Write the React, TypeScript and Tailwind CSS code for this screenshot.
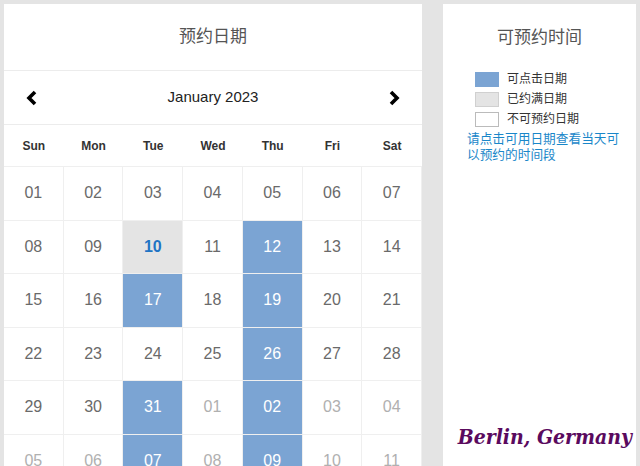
const weekDays = ["Sun", "Mon", "Tue", "Wed", "Thu", "Fri", "Sat"]

type Day = { label: string; kind: "normal" | "open" | "full" | "other" }

const openDays = ["12", "17", "19", "26", "31"]

function buildDays(): Day[] {
  const days: Day[] = []
  for (let d = 1; d <= 31; d++) {
    const label = String(d).padStart(2, "0")
    let kind: Day["kind"] = "normal"
    if (openDays.includes(label)) kind = "open"
    if (label === "10") kind = "full"
    days.push({ label, kind })
  }
  for (let d = 1; d <= 11; d++) {
    const label = String(d).padStart(2, "0")
    days.push({ label, kind: label === "02" || label === "07" || label === "09" ? "open" : "other" })
  }
  return days
}

function Chevron({ dir }: { dir: "left" | "right" }) {
  return (
    <svg width="14" height="16" viewBox="0 0 14 16">
      <polyline
        points={dir === "left" ? "10,2 4,8 10,14" : "4,2 10,8 4,14"}
        fill="none"
        stroke="#000"
        strokeWidth="3.6"
        strokeLinejoin="miter"
      />
    </svg>
  )
}

function DayCell({ day }: { day: Day }) {
  const base = "h-[53.5px] flex items-center justify-center border-r border-b border-[#efefef] text-[16px]"
  if (day.kind === "open") {
    return <div className={`${base} bg-[#7ba4d3] text-white border-[#9fbde0]`}>{day.label}</div>
  }
  if (day.kind === "full") {
    return <div className={`${base} bg-[#e4e4e4] text-[#1f74c4] font-bold text-[15px]`}>{day.label}</div>
  }
  if (day.kind === "other") {
    return <div className={`${base} text-[#b0b0b0]`}>{day.label}</div>
  }
  return <div className={`${base} text-[#6a6a6a]`}>{day.label}</div>
}

export default function App() {
  const days = buildDays()
  return (
    <div
      className="relative w-[640px] h-[466px] overflow-hidden bg-[#e4e4e4] pt-[4px] pl-[4px] flex gap-[21px]"
      style={{ fontFamily: '"Liberation Sans", "Noto Sans CJK SC", sans-serif' }}
    >
      <div className="w-[418px] bg-white self-start">
        <div className="h-[67px] border-b border-[#ececec] flex items-center justify-center text-[17px] text-[#555]">
          预约日期
        </div>
        <div className="h-[54px] border-b border-[#ececec] flex items-center justify-between px-[21px]">
          <Chevron dir="left" />
          <span className="text-[15px] text-[#222]">January 2023</span>
          <Chevron dir="right" />
        </div>
        <div className="grid grid-cols-7 h-[42px] border-b border-[#efefef]">
          {weekDays.map((w) => (
            <div key={w} className="flex items-center justify-center text-[12px] font-bold text-[#333]">
              {w}
            </div>
          ))}
        </div>
        <div className="grid grid-cols-7">
          {days.map((d, i) => (
            <DayCell key={i} day={d} />
          ))}
        </div>
      </div>

      <div className="w-[193px] h-[470px] bg-white">
        <div className="h-[67px] flex items-center justify-center text-[17px] text-[#555]">可预约时间</div>
        <div className="pl-[32px] flex flex-col gap-[4px]">
          <div className="flex items-center gap-[8px] h-[16px]">
            <span className="w-[24px] h-[15px] bg-[#7ba4d3] border border-[#7ba4d3]" />
            <span className="text-[12px] text-[#333]">可点击日期</span>
          </div>
          <div className="flex items-center gap-[8px] h-[16px]">
            <span className="w-[24px] h-[15px] bg-[#e4e4e4] border border-[#d0d0d0]" />
            <span className="text-[12px] text-[#333]">已约满日期</span>
          </div>
          <div className="flex items-center gap-[8px] h-[16px]">
            <span className="w-[24px] h-[15px] bg-white border border-[#bbb]" />
            <span className="text-[12px] text-[#333]">不可预约日期</span>
          </div>
        </div>
        <p className="pl-[24px] pr-[8px] mt-[4px] text-[12.7px] leading-[16px] text-[#1a87c9]">
          请点击可用日期查看当天可以预约的时间段
        </p>
      </div>

      <div
        className="absolute right-[8px] top-[421px] text-[21px] font-bold italic text-[#5a0a5e]"
        style={{ fontFamily: '"DejaVu Serif", serif', fontStretch: "condensed" }}
      >
        Berlin, Germany
      </div>
    </div>
  )
}
